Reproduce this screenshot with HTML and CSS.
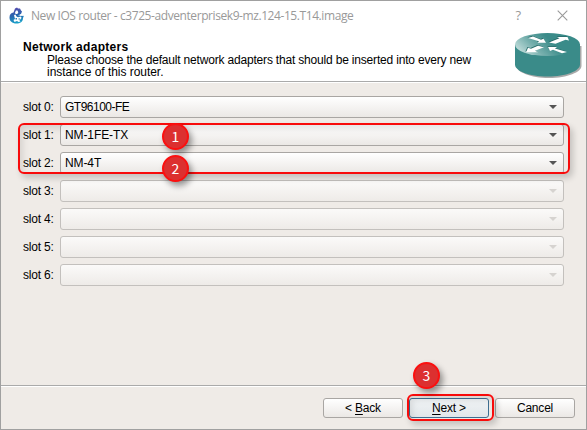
FILE: index.html
```html
<!DOCTYPE html>
<html lang="en">
<head>
<meta charset="utf-8">
<title>New IOS router</title>
<link rel="stylesheet" href="styles.css">
</head>
<body>
<div class="window">
  <header class="titlebar">
    <svg class="app-icon" width="16" height="17" viewBox="0 0 16 17">
      <defs><linearGradient id="chameleon" x1="0.3" y1="0" x2="0.5" y2="1"><stop offset="0" stop-color="#5948ae"/><stop offset=".5" stop-color="#2865ae"/><stop offset="1" stop-color="#19a5cb"/></linearGradient></defs>
      <path fill="url(#chameleon)" d="M6 1.500 8 .5l1 1 2 0 1 2 1 1-1 2.500-3 1.500H15L14 11c0 4-3 5.500-6.500 5.500C3 16.500.5 14 .5 10.500.5 7.500 2 6 4.500 5.500z"/>
      <path fill="#fff" d="M7 3.500h1.500l.8 2-1 1.500H6.500l-.5-1.500zM5 8l1.500-.5 1 2 1.500.8 3-.8.5 1.500-2 2.500 1 1-2 .5-1.500-1-2.500 1-1-2 1.500-1zM11 7.500h4v1.300h-4z"/>
      <path fill="#2b7fb8" d="M6.500 11h1.500v1.500H6.500zM9.500 11.500h1.500v1H9.500z"/>
    </svg>
    <span class="title">New IOS router - c3725-adventerprisek9-mz.124-15.T14.image</span>
    <span class="help">?</span>
    <svg class="close" width="11" height="11" viewBox="0 0 11 11"><path d="M.7.7l9.600 9.600M10.300.7L.7 10.300" stroke="#999" stroke-width="1.100"/></svg>
  </header>
  <section class="banner">
    <div class="banner-text">
      <h1>Network adapters</h1>
      <p><span class="line-one">Please choose the default network adapters that should be inserted into every new</span><br><span class="line-two">instance of this router.</span></p>
    </div>
    <svg class="router" width="67" height="46" viewBox="0 0 67 46">
      <defs><linearGradient id="top" x1="0" y1=".55" x2=".55" y2=".35"><stop offset="0" stop-color="#b9d8d6"/><stop offset=".45" stop-color="#77b0ae"/><stop offset="1" stop-color="#3a8b89"/></linearGradient></defs>
      <path fill="#a9a9a9" d="M1.500 13v20c0 6 14 12 32.500 12s32.500-6 32.500-12V13z"/>
      <path fill="#3a8b89" d="M0 11.500v20C0 38 14 43.500 32.500 43.500S65 38 65 31.500v-20z"/>
      <ellipse cx="32.500" cy="11.500" rx="32.500" ry="11.500" fill="url(#top)"/>
      <path fill="#276b69" transform="translate(-.6 -.8)" d="M13 5l5-1.500 8 3.200 2.500-1 2.500 4h-8.500l1.500-1.500zM34 9.500l10.500-4.200-2.500-1.300h10.500l1.500 3.500-3.500-.8-10 4zM29 14.200l-9 3.600 3 1.500H11l2-4.500 3 1 7-3zM33 14h9l-2 1.500 12 3.500-5 1.200-9-3.500-3 1.300z"/>
      <path fill="#fff" d="M13 5l5-1.500 8 3.200 2.500-1 2.500 4h-8.500l1.500-1.500zM34 9.500l10.500-4.200-2.500-1.300h10.500l1.500 3.500-3.500-.8-10 4zM29 14.200l-9 3.600 3 1.500H11l2-4.500 3 1 7-3zM33 14h9l-2 1.500 12 3.500-5 1.200-9-3.500-3 1.300z"/>
    </svg>
  </section>
  <main class="slots">
    <div class="slot"><label>slot 0:</label><div class="combo"><span>GT96100-FE</span><i></i></div></div>
    <div class="slot"><label>slot 1:</label><div class="combo"><span class="wide">NM-1FE-TX</span><i></i></div></div>
    <div class="slot"><label>slot 2:</label><div class="combo"><span class="wide">NM-4T</span><i></i></div></div>
    <div class="slot"><label>slot 3:</label><div class="combo disabled"><i></i></div></div>
    <div class="slot"><label>slot 4:</label><div class="combo disabled"><i></i></div></div>
    <div class="slot"><label>slot 5:</label><div class="combo disabled"><i></i></div></div>
    <div class="slot"><label>slot 6:</label><div class="combo disabled"><i></i></div></div>
  </main>
  <footer class="actions">
    <button><span>&lt; <u>B</u>ack</span></button>
    <button class="primary"><span><u>N</u>ext &gt;</span></button>
    <button><span>Cancel</span></button>
  </footer>
  <div class="mark mark-slots"></div>
  <div class="mark mark-next"></div>
  <div class="badge badge-1">1</div>
  <div class="badge badge-2">2</div>
  <div class="badge badge-3">3</div>
</div>
</body>
</html>
```
FILE: styles.css
```css
* { box-sizing: border-box; }
body { margin: 0; font: 12px/12px "Liberation Sans", sans-serif; color: #000; }
.window { position: relative; width: 587px; height: 430px; border: 1px solid #a0a0a0; background: #efebe7; display: flex; flex-direction: column; overflow: hidden; white-space: nowrap; }
.titlebar { flex: 0 0 30px; background: #fff; display: flex; align-items: center; padding: 0 18px 0 8px; color: #999; }
.app-icon { margin: 0 6px 2px 0; }
.title { font: 12px/16px "Open Sans", sans-serif; letter-spacing: -.42px; flex: 1; }
.help { font: 13px/16px "Open Sans", sans-serif; margin: 0 36px 2px 0; }
.close { margin-bottom: 1px; }
.banner { flex: 0 0 51px; background: #fff; border-bottom: 1px solid #aaa; box-shadow: 0 1px #fff; display: flex; justify-content: space-between; padding: 1px 4px 0 22px; }
.banner-text { padding-top: 9px; }
.router { margin-top: 1px; }
h1 { margin: 0; font: bold 12px/13px "Liberation Sans", sans-serif; letter-spacing: .3px; }
.banner p { margin: 0 0 0 24px; line-height: 12px; }
.line-one { letter-spacing: -.185px; }
.line-two { letter-spacing: -.04px; }
.slots { flex: 1; display: flex; flex-direction: column; gap: 6px; padding: 14px 22px 0 22px; }
.slot { display: flex; height: 22px; align-items: center; }
.slot label { width: 37px; letter-spacing: -.2px; }
.combo { flex: 1; height: 22px; border: 1px solid #a9a6a3; border-radius: 3px; background: linear-gradient(#fff, #ebe8e5); display: flex; align-items: center; padding: 0 6px 0 4px; }
.combo span { letter-spacing: -.5px; }
.combo .wide { letter-spacing: -.1px; }
.combo i { margin-left: auto; border: solid transparent; border-width: 4px 4px 0; border-top-color: #555; }
.combo.disabled { border-color: #c3c0bd; background: linear-gradient(#fbfaf9, #eeebe8); }
.combo.disabled i { border-top-color: #d6d3d0; }
.actions { flex: 0 0 44px; border-top: 1px solid #aaa; box-shadow: inset 0 1px #fff; display: flex; justify-content: flex-end; gap: 6px; padding: 12px 11px 0 0; }
button { width: 80px; height: 20px; padding: 0; border: 1px solid #a9a6a3; border-radius: 3px; background: linear-gradient(#fff, #ebe8e5); font: inherit; letter-spacing: -.2px; color: #000; }
button.primary { border-color: #3e6f92; background: linear-gradient(#f1f4f6, #e1e6e9); }
u { text-underline-offset: 2px; }
.mark { position: absolute; border: 2px solid #f80b0b; border-radius: 6px; box-shadow: 3px 4px 6px rgba(0,0,0,.18), inset 3px 4px 6px rgba(0,0,0,.1); }
.mark-slots { left: 17px; top: 122px; width: 552px; height: 51px; }
.mark-next { left: 406px; top: 393px; width: 87px; height: 27px; }
.badge { position: absolute; width: 27px; height: 27px; border: 2px solid #fb1010; border-radius: 50%; background: #dc3030; color: #fff; font: 14px/22px "Noto Sans CJK JP", sans-serif; text-align: center; box-shadow: 3px 4px 6px rgba(0,0,0,.4); }
.badge-1 { left: 161px; top: 122px; }
.badge-2 { left: 161px; top: 154px; }
.badge-3 { left: 412px; top: 361px; }
```
